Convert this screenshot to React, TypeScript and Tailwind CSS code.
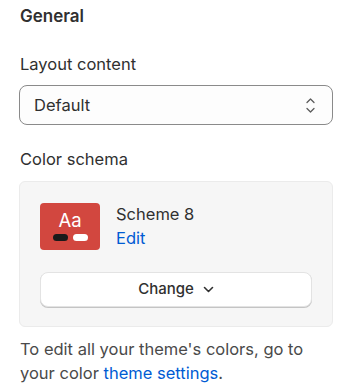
export default function App() {
  return (
    <div
      className="w-[351px] h-[392px] bg-white text-[#303030] overflow-hidden"
      style={{ fontFamily: "Inter, 'Liberation Sans', sans-serif" }}
    >
      <div className="pl-[19px] pr-[18px] pt-[4px]">
        <h2 className="pl-px text-[17px] font-semibold leading-6">General</h2>

        <div className="mt-6 pl-px text-[16.5px] leading-6">Layout content</div>
        <div className="mt-[9px] h-10 flex items-center justify-between rounded-lg border border-[#8a8a8a] bg-[#fdfdfd] pl-[14px] pr-[17px]">
          <span className="text-[16.5px]">Default</span>
          <svg width="9" height="15" viewBox="0 0 9 15" fill="none" stroke="#5c5c5c" strokeWidth="1.3" strokeLinecap="round" strokeLinejoin="round">
            <path d="M1 4.5 L4.5 1 L8 4.5" />
            <path d="M1 10.5 L4.5 14 L8 10.5" />
          </svg>
        </div>

        <div className="mt-[22px] pl-px text-[16.5px] leading-6">Color schema</div>
        <div className="mt-[10px] rounded-md border border-[#ebebeb] bg-[#f6f6f6] pl-5 pr-[20px] pt-[21px] pb-[19px]">
          <div className="flex items-start gap-4">
            <div className="w-[60px] h-[47px] rounded bg-[#d2473f] flex flex-col items-center pt-[6px]">
              <span className="text-white text-[18.5px] leading-[22px]">Aa</span>
              <div className="mt-[3px] flex gap-[5px]">
                <div className="w-[15px] h-[7px] rounded-full bg-[#1a1a1a]" />
                <div className="w-[15px] h-[7px] rounded-full bg-white" />
              </div>
            </div>
            <div className="flex flex-col -mt-px">
              <span className="text-[16.5px] leading-6">Scheme 8</span>
              <span className="text-[16.5px] leading-6 text-[#005bd3]">Edit</span>
            </div>
          </div>
          <button className="mt-[22px] w-full h-[35px] flex items-center justify-center gap-[9px] rounded-lg bg-white border border-[#e3e3e3] shadow-[0_1px_0_#c4c4c4] text-[15px] font-medium">
            Change
            <svg width="11" height="7" viewBox="0 0 11 7" fill="none" stroke="#303030" strokeWidth="1.6" strokeLinecap="round" strokeLinejoin="round">
              <path d="M1.5 1.5 L5.5 5.5 L9.5 1.5" />
            </svg>
          </button>
        </div>

        <p className="mt-[10px] pl-px pr-[20px] text-[16.5px] leading-6 text-[#4a4a4a]">
          To edit all your theme's colors, go to your color{" "}
          <span className="text-[#005bd3]">theme settings</span>.
        </p>
      </div>
    </div>
  );
}
